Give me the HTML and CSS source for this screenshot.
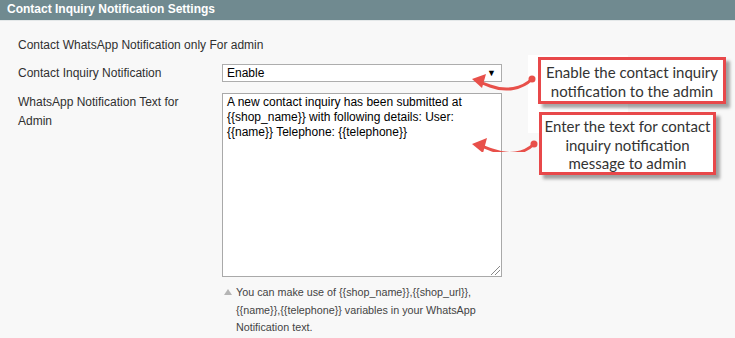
FILE: index.html
```html
<!DOCTYPE html>
<html lang="en">
<head>
  <meta charset="UTF-8">
  <title>Contact Inquiry Notification Settings</title>
  <link rel="stylesheet" href="styles.css">
</head>
<body>

  <div class="section-head">Contact Inquiry Notification Settings</div>

  <div class="section-body">
    <div class="intro">Contact WhatsApp Notification only For admin</div>

    <div class="row">
      <label class="row-label">Contact Inquiry Notification</label>
      <div class="row-field">
        <div class="select">
          <span>Enable</span>
          <span class="caret">&#9660;</span>
        </div>
      </div>
    </div>

    <div class="row">
      <label class="row-label">WhatsApp Notification Text for Admin</label>
      <div class="row-field">
        <div class="textarea">A new contact inquiry has been submitted at {{shop_name}} with following details: User: {{name}} Telephone: {{telephone}}<span class="grip"></span></div>
        <div class="note">You can make use of {{shop_name}},{{shop_url}}, {{name}},{{telephone}} variables in your WhatsApp Notification text.</div>
      </div>
    </div>
  </div>

  <!-- annotations drawn over the screenshot -->
  <div class="backdrop"></div>

  <div class="callout callout-one">Enable the contact inquiry<br>notification to the admin</div>
  <div class="callout callout-two">Enter the text for contact<br>inquiry notification<br>message to admin</div>

  <svg class="arrows" width="80" height="100" viewBox="0 0 80 100">
    <!-- arrow to select -->
    <path d="M70 27 C60 37 44 40 28 34 C22 32 18 30 14 28" fill="none" stroke="#e8504a" stroke-width="3" stroke-linecap="round"/>
    <circle cx="70" cy="27" r="3.5" fill="#e8504a"/>
    <polygon points="10,27 24,22 20,36" fill="#e8504a"/>
    <!-- arrow to textarea -->
    <path d="M72 92 C62 102 46 104 30 98 C24 96 20 94 16 93" fill="none" stroke="#e8504a" stroke-width="3" stroke-linecap="round"/>
    <circle cx="72" cy="92" r="3.5" fill="#e8504a"/>
    <polygon points="10,92 25,86 21,101" fill="#e8504a"/>
  </svg>

</body>
</html>
```

FILE: styles.css
```css
body {
  margin: 0;
  font-family: 'Liberation Sans', Arial, sans-serif;
  font-size: 12px;
  color: #303030;
  background: #f8f8f8;
  width: 735px;
  height: 338px;
  overflow: hidden;
  position: relative;
}

.section-head {
  height: 20px;
  line-height: 19px;
  padding-left: 7px;
  background: #708a90;
  border-bottom: 1px solid #e4e8e9;
  color: white;
  font-weight: bold;
  font-size: 12px;
}

.section-body {
  padding: 16px 0 0 18px;
}

.intro {
  line-height: 16px;
  margin-bottom: 11px;
}

.row {
  display: flex;
  margin-bottom: 10px;
}

.row-label {
  width: 180px;
  margin-right: 24px;
  line-height: 19px;
}

.row-field {
  width: 280px;
}

.select {
  display: flex;
  justify-content: space-between;
  align-items: center;
  height: 16px;
  padding: 0 4px;
  background: white;
  border: 1px solid #adadad;
  color: #000;
  font-size: 12px;
}

.caret {
  font-size: 9px;
  margin-right: 1px;
}

.textarea {
  position: relative;
  height: 178px;
  padding: 1px 4px 3px;
  background: white;
  border: 1px solid #a9a9a9;
  color: #000;
  line-height: 15px;
  margin-bottom: 7px;
}

.grip {
  position: absolute;
  right: 1px;
  bottom: 1px;
  width: 9px;
  height: 9px;
  background: linear-gradient(135deg, transparent 45%, #888 45%, #888 52%, transparent 52%, transparent 70%, #888 70%, #888 77%, transparent 77%);
}

.note {
  position: relative;
  padding-left: 14px;
  font-size: 10.75px;
  line-height: 17.5px;
  color: #444;
}

.note::before {
  content: "";
  position: absolute;
  left: 2px;
  top: 5px;
  border-left: 4px solid transparent;
  border-right: 4px solid transparent;
  border-bottom: 6px solid #b5b5b5;
}

.backdrop {
  position: absolute;
  left: 528px;
  top: 55px;
  width: 100px;
  height: 78px;
  background: white;
}

.callout {
  position: absolute;
  box-sizing: border-box;
  background: white;
  border: 3px solid #e8484a;
  box-shadow: 4px 4px 3px rgba(0,0,0,0.35);
  font-family: Lato, 'Open Sans', sans-serif;
  font-size: 15px;
  line-height: 18.5px;
  color: #333;
  text-align: center;
}

.callout-one {
  left: 538px;
  top: 57px;
  width: 188px;
  height: 47px;
  padding-top: 3px;
}

.callout-two {
  left: 539px;
  top: 112px;
  width: 177px;
  height: 63px;
  padding-top: 2px;
}

.arrows {
  position: absolute;
  left: 462px;
  top: 52px;
}
```
